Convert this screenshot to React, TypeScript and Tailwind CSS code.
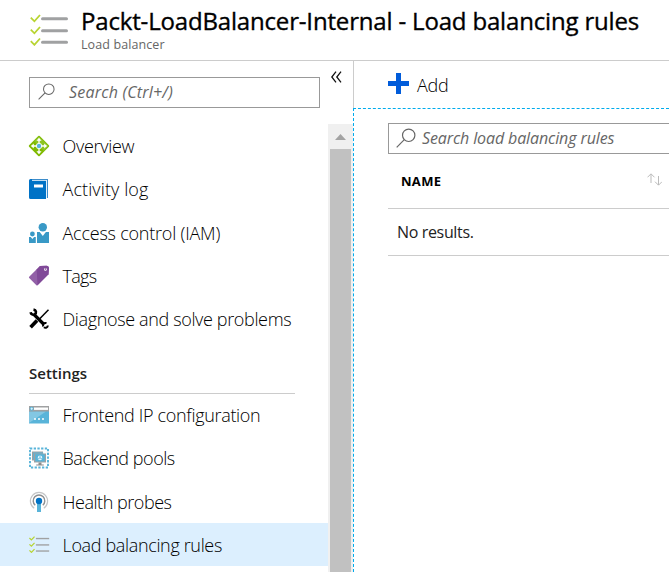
import type { ReactNode } from "react";

function ChecklistIcon({ className, thin = false }: { className: string; thin?: boolean }) {
  return (
    <svg className={className} viewBox="0 0 38 32" fill="none" preserveAspectRatio="none">
      {[4, 16, 27.5].map((y) => (
        <g key={y}>
          <path d={`M0.8 ${y - 0.3}l3.6 3.6L10 ${y - 3}`} stroke="#b8d432" strokeWidth={thin ? 2.2 : 1.8} />
          <path d={`M12.5 ${y + 0.8}H36.5`} stroke="#a0a1a2" strokeWidth={thin ? 2.6 : 3} strokeLinecap={thin ? "butt" : "round"} />
        </g>
      ))}
    </svg>
  );
}

function SearchIcon({ className }: { className: string }) {
  return (
    <svg className={className} viewBox="0 0 20 20" fill="none" stroke="currentColor" strokeWidth="1.2">
      <circle cx="12.7" cy="7.3" r="6.2" />
      <path d="M8.3 11.7L0.7 19.3" />
    </svg>
  );
}

function OverviewIcon() {
  return (
    <svg className="size-[22px]" viewBox="0 0 22 22">
      <path d="M11 1.8L20.2 11 11 20.2 1.8 11z" fill="#7fba00" stroke="#7fba00" strokeWidth="2" strokeLinejoin="round" />
      <path d="M11 1.2L20.8 11 16 16 6 6z" fill="#8dc521" />
      <path d="M11 4v14M4 11h14" stroke="#fff" strokeWidth="1.3" />
      <path d="M11 2.8l2.6 3H8.4zM11 19.2l2.6-3H8.4zM2.8 11l3-2.6v5.2zM19.2 11l-3-2.6v5.2z" fill="#fff" />
      <circle cx="11" cy="11" r="3" fill="#fff" />
      <circle cx="11" cy="11" r="2.2" fill="#59b4d9" />
    </svg>
  );
}

function LogIcon() {
  return (
    <svg className="size-[22px]" viewBox="0 0 22 22">
      <path d="M4 1h16v19H4z" fill="#3c8cca" />
      <path d="M18.5 2v18" stroke="#e5f1fa" strokeWidth="1" />
      <path d="M4 2.5h14" stroke="#e5f1fa" strokeWidth=".8" />
      <path d="M3 3H18v18H2.500A1.500 1.500 0 0 1 1 19.500V2.500A1.500 1.500 0 0 1 2.500 1H4v2z" fill="#0072c6" />
      <path d="M6 6.500h9v3H6z" fill="#fff" />
    </svg>
  );
}

function PeopleIcon() {
  return (
    <svg className="size-[22px]" viewBox="0 0 22 22" fill="#3999c6">
      <circle cx="14.8" cy="5.2" r="4.2" />
      <path d="M9 10h2.700l3.100 4 3.100-4H21v11H9z" />
      <circle cx="4.400" cy="12" r="2.400" />
      <path d="M1 15h1.700l1.700 2 1.700-2H7.800v6H1z" />
    </svg>
  );
}

function TagIcon() {
  return (
    <svg className="size-[22px]" viewBox="0 0 22 22">
      <path d="M12 1l6.500-.2c1.500 0 2.500 1 2.500 2.400l-.5 6L9.600 20.200c-.4.400-.8.400-1.200 0L1.200 13c-.4-.4-.4-.8 0-1.200z" fill="#9260a7" />
      <path d="M12 1l6.500-.2c1.500 0 2.500 1 2.500 2.400l-.5 6L9.500 20.300 8.700 4.400z" fill="#804998" />
      <circle cx="17.400" cy="4.400" r="1.400" fill="#fff" />
      <circle cx="17.400" cy="4" r=".8" fill="#68347e" />
    </svg>
  );
}

function ToolsIcon() {
  return (
    <svg className="size-[22px]" viewBox="0 0 22 22" fill="none" stroke="#000">
      <path d="M5.500 6L16 16.500" strokeWidth="3.200" />
      <path d="M2.600 4.200c.4 2.200 2.500 3 4 2.300C8.900 5 8.200 2 5.500 1.600" strokeWidth="2.600" />
      <path d="M15.300 18.500c-.9-2.200.5-4 3.200-3.500M19.800 17.500c0 2-2.300 3-3.900 1.800" strokeWidth="2" />
      <path d="M20.500 1.800L10.500 12" strokeWidth="1.500" />
      <path d="M9 12.500L2.600 19.300" strokeWidth="3.600" />
    </svg>
  );
}

function FrontendIcon() {
  return (
    <svg className="size-[22px]" viewBox="0 0 22 22">
      <path d="M1 2h20v17.500H1z" fill="#59b4d9" />
      <path d="M1 7.500h17L1 19z" fill="#83c7e3" />
      <path d="M1 2h20v5.500H1z" fill="#a0a1a2" />
      <path d="M6 3.500h14v2.400H6z" fill="#fff" />
      <circle cx="3.600" cy="4.700" r="2" fill="#59b4d9" />
      <path d="M2.500 4.700h2.400M3.700 3.500V6" stroke="#fff" strokeWidth=".7" />
      <path d="M6 15h2M10 15h2M14 15h2" stroke="#fff" strokeWidth="1.700" />
    </svg>
  );
}

function BackendIcon() {
  return (
    <svg className="size-[22px]" viewBox="0 0 22 22">
      <path d="M2 1.500h18v19H2z" fill="none" stroke="#59b4d9" strokeWidth="1.900" strokeDasharray="2.300 1.400" />
      <path d="M4 4.500h11v9H4z" fill="#a0a1a2" />
      <path d="M5.200 5.500h10v7h-10z" fill="#59b4d9" />
      <path d="M6 6.500h12v9H6z" fill="#a0a1a2" />
      <path d="M7.200 7.200h9.600v7.300H7.200z" fill="#59b4d9" />
      <path d="M10.500 15.500h3v2h2.300v1H8.200v-1h2.300z" fill="#8a8b8c" />
      <circle cx="12" cy="10.900" r="2.300" fill="#e8f6fc" />
      <path d="M12 10.900V8.600M12 10.900l-2.200 1.200M12 10.900l2.200 1.200" stroke="#59b4d9" strokeWidth=".8" />
    </svg>
  );
}

function ProbeIcon() {
  return (
    <svg className="size-[22px]" viewBox="0 0 22 22" fill="none">
      <path d="M6.200 17.200a8.600 8.600 0 1 1 9.600 0" stroke="#c5c6c7" strokeWidth="1.200" />
      <path d="M7.200 14.200a5.800 5.800 0 1 1 7.600 0" stroke="#8e9092" strokeWidth="1.400" />
      <path d="M9 11h4v10H9z" fill="#59b4d9" />
      <circle cx="11" cy="10" r="3.200" fill="#0072c6" />
    </svg>
  );
}

function MenuRow({ icon, label, tracking, active = false }: { icon: ReactNode; label: string; tracking: string; active?: boolean }) {
  return (
    <div className={`flex h-[43.2px] items-center pl-7 ${active ? "bg-[#dceffe]" : ""}`}>
      <span className="flex w-[34.5px] shrink-0">{icon}</span>
      <span className={`text-[18px] leading-6 font-light whitespace-nowrap text-black ${tracking}`}>{label}</span>
    </div>
  );
}

export default function App() {
  return (
    <div className="flex h-[572px] w-[669px] flex-col overflow-hidden bg-white font-['Open_Sans','Noto_Sans',sans-serif] font-normal text-[#222]">
      <header className="flex h-[61px] shrink-0 border-b border-[#ccc] pl-[30px]">
        <ChecklistIcon className="mt-[14px] h-8 w-[38px] shrink-0" />
        <div className="pt-[7px] pl-[13px]">
          <h1 className="text-[24px] leading-7 tracking-[-0.17px] whitespace-nowrap text-black [-webkit-text-stroke:0.35px_black]">
            Packt-LoadBalancer-Internal - Load balancing rules
          </h1>
          <p className="pt-px text-[12.5px] leading-[17px] tracking-[0.1px] text-[#666]">Load balancer</p>
        </div>
      </header>
      <div className="flex min-h-0 flex-1">
        <aside className="flex w-[353px] shrink-0 flex-col">
          <div className="flex h-[63px] shrink-0 pl-[29px]">
            <div className="mt-4 flex h-[31px] w-[291px] items-center border border-[#999] pb-[2px] pl-2 text-[#666]">
              <SearchIcon className="mr-[14px] size-[17px]" />
              <span className="text-base leading-5 tracking-[0.2px] italic">Search (Ctrl+/)</span>
            </div>
            <svg className="mt-[10px] ml-[11px] h-3 w-[11px]" viewBox="0 0 11 12" fill="none" stroke="#111" strokeWidth="1.3">
              <path d="M5 .7L.8 6 5 11.3M10 .7L5.8 6l4.2 5.3" />
            </svg>
          </div>
          <div className="flex min-h-0 flex-1">
            <nav className="w-[328px] pt-[0.6px]">
              <MenuRow icon={<OverviewIcon />} label="Overview" tracking="tracking-[-0.3px]" />
              <MenuRow icon={<LogIcon />} label="Activity log" tracking="tracking-[0.1px]" />
              <MenuRow icon={<PeopleIcon />} label="Access control (IAM)" tracking="tracking-[-0.22px]" />
              <MenuRow icon={<TagIcon />} label="Tags" tracking="tracking-[-0.7px]" />
              <MenuRow icon={<ToolsIcon />} label="Diagnose and solve problems" tracking="tracking-[-0.36px]" />
              <div className="mr-[33px] ml-[29px] h-[53px] border-b border-[#ccc] pt-[22px]">
                <h2 className="text-[15px] leading-5 font-semibold">Settings</h2>
              </div>
              <MenuRow icon={<FrontendIcon />} label="Frontend IP configuration" tracking="tracking-[-0.32px]" />
              <MenuRow icon={<BackendIcon />} label="Backend pools" tracking="tracking-[-0.46px]" />
              <MenuRow icon={<ProbeIcon />} label="Health probes" tracking="tracking-[-0.46px]" />
              <MenuRow
                icon={<ChecklistIcon thin className="ml-px h-[17px] w-[21px]" />}
                label="Load balancing rules"
                tracking="tracking-[-0.35px]"
                active
              />
            </nav>
            <div className="flex w-[25px] flex-col bg-[#f0f0f0] pr-[2px] pl-[2px]">
              <div className="flex h-[25px] shrink-0 items-center justify-center">
                <svg className="h-[6px] w-[11px]" viewBox="0 0 11 6">
                  <path d="M0 6L5.5 0 11 6z" fill="#a3a3a3" />
                </svg>
              </div>
              <div className="flex-1 bg-[#c1c1c1]" />
            </div>
          </div>
        </aside>
        <main className="flex min-w-0 flex-1 flex-col">
          <div className="flex h-[47px] shrink-0 items-center border-l border-[#ccc] pl-[34px]">
            <svg className="mb-[2px] size-[21px]" viewBox="0 0 21 21">
              <path d="M8 0h5v8h8v5h-8v8H8v-8H0V8h8z" fill="#015cda" />
            </svg>
            <span className="ml-2 text-[18px] leading-6 font-light tracking-[-0.3px] text-black">Add</span>
          </div>
          <div className="flex-1 border-t border-l border-dashed border-[#00abec] pt-[14px] pl-[34px]">
            <div className="flex h-[31px] items-center border border-r-0 border-[#999] pb-[2px] pl-[7px] text-[#666]">
              <SearchIcon className="mr-[6px] size-5" />
              <span className="text-base leading-5 tracking-[-0.12px] whitespace-nowrap italic">Search load balancing rules</span>
            </div>
            <div className="flex h-[55px] justify-between border-b border-[#ccc] pt-[17px] pr-[7px] pl-[13px]">
              <span className="text-[13px] leading-5 font-bold tracking-[0.3px] text-black">NAME</span>
              <svg className="mt-[2px] h-[13px] w-[15px]" viewBox="0 0 15 13" fill="none" stroke="#bbb">
                <path d="M4 10V1M.5 4.3L4 .8l3.5 3.500M11.500 3v9M8 8.700l3.500 3.500L15 8.700" />
              </svg>
            </div>
            <div className="flex h-[47px] items-center border-b border-[#ccc] pl-[9px]">
              <span className="text-base leading-5 tracking-[-0.35px]">No results.</span>
            </div>
          </div>
        </main>
      </div>
    </div>
  );
}
